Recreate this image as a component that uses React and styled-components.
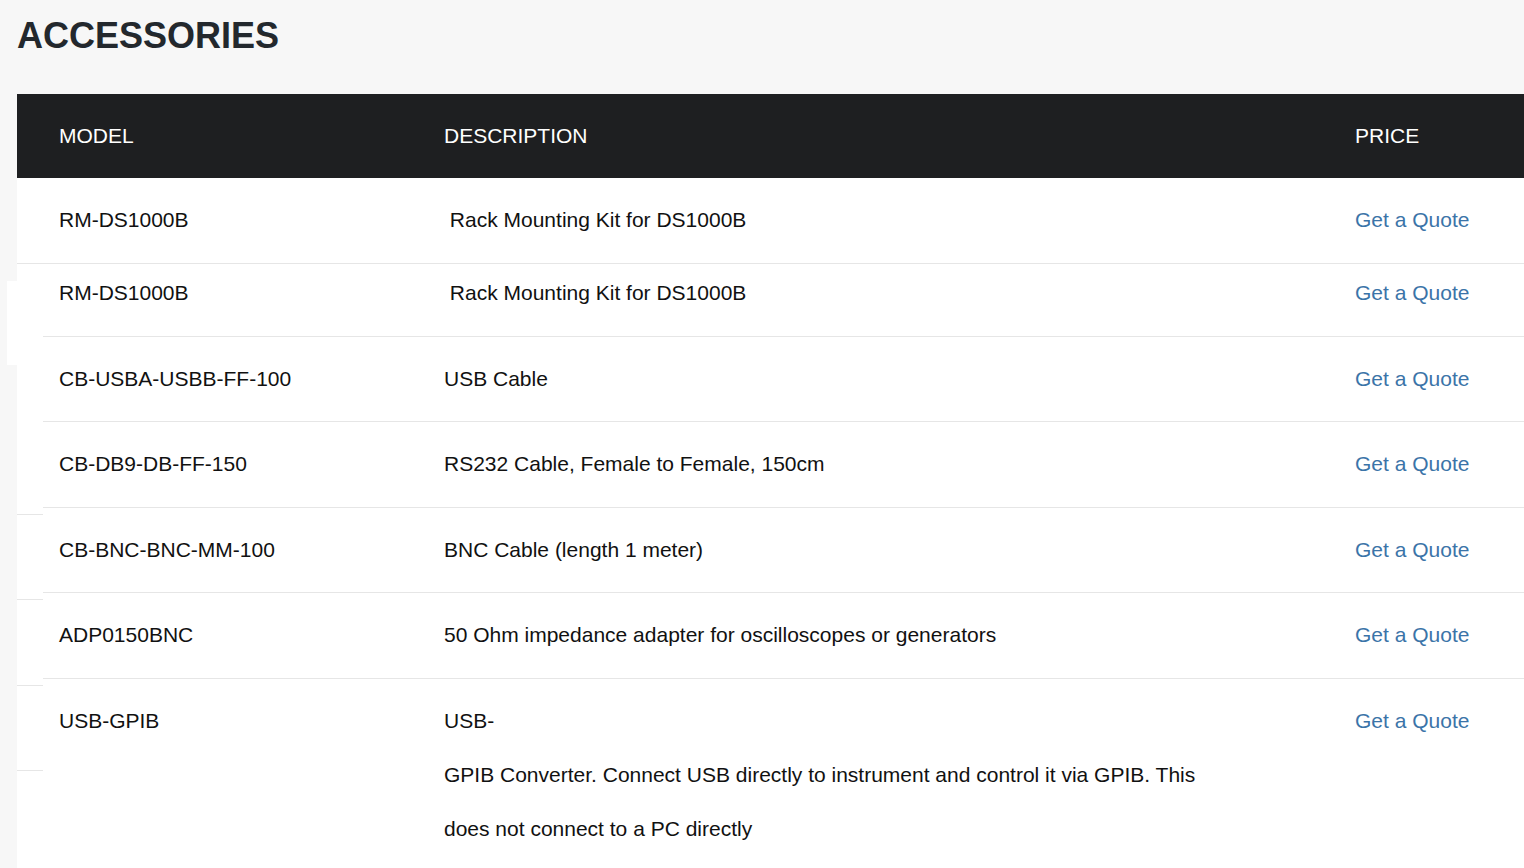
import React from "react";
import styled, { createGlobalStyle } from "styled-components";

const GlobalStyle = createGlobalStyle`
  html, body {
    margin: 0;
    padding: 0;
    background: #f7f7f7;
    font-family: "Liberation Sans", Arial, sans-serif;
    overflow: hidden;
  }
`;

const Page = styled.div`
  padding: 15px 0 0 17px;
`;

const Title = styled.h2`
  margin: 0 0 38px 0;
  font-size: 36px;
  line-height: 41px;
  font-weight: 700;
  color: #23282d;
`;

const Table = styled.div`
  display: flex;
  flex-direction: column;
  background: #fff;
`;

const HeadRow = styled.div`
  display: grid;
  grid-template-columns: 385px 911px 1fr;
  padding-left: 26px;
  background: #1e1f21;
  color: #fff;
  font-size: 21px;
  line-height: 54px;
`;

const HeadCell = styled.div`
  padding: 15px 16px;
`;

const Body = styled.div`
  display: flex;
`;

const Gutter = styled.div`
  position: relative;
  width: 26px;
  flex-shrink: 0;
  display: flex;
  flex-direction: column;
`;

const GutterMark = styled.div`
  box-sizing: border-box;
  height: ${(p) => p.$h}px;
  flex-shrink: 0;
  border-bottom: 1px solid ${(p) => (p.$line ? "#e6e6e6" : "transparent")};
`;

const GutterPatch = styled.div`
  position: absolute;
  left: -10px;
  top: 103px;
  width: 10px;
  height: 84px;
  background: #fff;
`;

const Rows = styled.div`
  flex: 1;
  display: flex;
  flex-direction: column;
`;

const Row = styled.div`
  display: grid;
  grid-template-columns: 385px 911px 1fr;
  border-bottom: 1px solid #e6e6e6;
  font-size: 21px;
  line-height: 54px;
  color: #111;
  padding: ${(p) => (p.$tight ? "2px 0 16px" : "15.25px 0")};
`;

const Cell = styled.div`
  padding: 0 16px;
`;

const Line = styled.span`
  display: block;
  white-space: pre;
`;

const Quote = styled.a`
  color: #3b74a8;
  text-decoration: none;
  cursor: pointer;
`;

const items = [
  { model: "RM-DS1000B", desc: ["\u00a0Rack Mounting Kit for DS1000B"] },
  { model: "RM-DS1000B", desc: ["\u00a0Rack Mounting Kit for DS1000B"], tight: true },
  { model: "CB-USBA-USBB-FF-100", desc: ["USB Cable"] },
  { model: "CB-DB9-DB-FF-150", desc: ["RS232 Cable, Female to Female, 150cm"] },
  { model: "CB-BNC-BNC-MM-100", desc: ["BNC Cable (length 1 meter)"] },
  { model: "ADP0150BNC", desc: ["50 Ohm impedance adapter for oscilloscopes or generators"] },
  {
    model: "USB-GPIB",
    desc: [
      "USB-",
      "GPIB Converter. Connect USB directly to instrument and control it via GPIB. This",
      "does not connect to a PC directly",
    ],
  },
];

// short left-edge rules that sit slightly off the row lines
const marks = [
  { h: 86, line: true },
  { h: 165, line: false },
  { h: 85.5, line: true },
  { h: 85.5, line: true },
  { h: 85.5, line: true },
  { h: 85.5, line: true },
  { h: 85.5, line: false },
];

export default function App() {
  return (
    <>
      <GlobalStyle />
      <Page>
        <Title>ACCESSORIES</Title>
        <Table>
          <HeadRow>
            <HeadCell>MODEL</HeadCell>
            <HeadCell>DESCRIPTION</HeadCell>
            <HeadCell>PRICE</HeadCell>
          </HeadRow>
          <Body>
            <Gutter>
              <GutterPatch />
              {marks.map((m, i) => (
                <GutterMark key={i} $h={m.h} $line={m.line} />
              ))}
            </Gutter>
            <Rows>
              {items.map((it, i) => (
                <Row key={i} $tight={it.tight}>
                  <Cell>{it.model}</Cell>
                  <Cell>
                    {it.desc.map((l, j) => (
                      <Line key={j}>{l}</Line>
                    ))}
                  </Cell>
                  <Cell>
                    <Quote>Get a Quote</Quote>
                  </Cell>
                </Row>
              ))}
            </Rows>
          </Body>
        </Table>
      </Page>
    </>
  );
}
